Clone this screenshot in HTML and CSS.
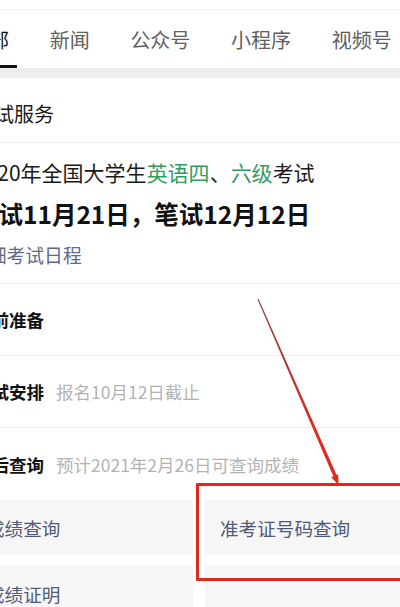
FILE: index.html
```html
<!DOCTYPE html>
<html lang="zh-CN">

<head>
    <meta charset="UTF-8">
    <meta name="viewport" content="width=device-width, initial-scale=1.0">
    <title>考试服务</title>
    <link rel="stylesheet" href="styles.css">
</head>

<body>
    <div class="page">
        <div class="top"></div>

        <nav class="tabs">
            <div class="tab active">全部</div>
            <div class="tab">新闻</div>
            <div class="tab">公众号</div>
            <div class="tab">小程序</div>
            <div class="tab">视频号</div>
        </nav>
        <div class="band"></div>

        <main class="card">
            <div class="card-title">考试服务</div>

            <section class="info">
                <p class="info-line">2020年全国大学生<span class="hl">英语四</span>、<span class="hl">六级</span>考试</p>
                <p class="info-date">口试11月21日，笔试12月12日</p>
                <p class="info-link">详细考试日程</p>
            </section>

            <ul class="steps">
                <li class="step"><span class="step-name">考前准备</span></li>
                <li class="step"><span class="step-name">考试安排</span><span class="step-note">报名10月12日截止</span></li>
                <li class="step"><span class="step-name">考后查询</span><span class="step-note">预计2021年2月26日可查询成绩</span></li>
            </ul>

            <div class="grid">
                <div class="cell">成绩查询</div>
                <div class="cell">准考证号码查询</div>
                <div class="cell">成绩证明</div>
                <div class="cell"></div>
            </div>
        </main>

        <!-- annotation on top of the screenshot -->
        <div class="mark-box"></div>
        <svg class="mark-arrow" width="400" height="607" viewBox="0 0 400 607">
            <defs>
                <linearGradient id="arrowGrad" x1="258" y1="299" x2="338" y2="484" gradientUnits="userSpaceOnUse">
                    <stop offset="0" stop-color="#8a3b3e" />
                    <stop offset="0.5" stop-color="#c9302a" />
                    <stop offset="1" stop-color="#e8261c" />
                </linearGradient>
            </defs>
            <polygon points="258.5,298.8 257.5,299.2 334.4,478.7 337.6,477.3" fill="url(#arrowGrad)" />
            <polygon points="338.6,485 331.3,477.2 338.1,474.3" fill="#e8261c" />
        </svg>
    </div>
</body>

</html>
```

FILE: styles.css
```css
/* Page frame */
body {
    margin: 0;
    background-color: #fff;
    font-family: "Noto Sans", "Noto Sans CJK SC", sans-serif;
    color: #1a1a1a;
}

.page {
    position: relative;
    width: 400px;
    height: 607px;
    overflow: hidden;
    background-color: #fff;
}

.top {
    height: 9px;
    border-bottom: 1px solid #f1f1f1;
}

/* Tabs */
.tabs {
    display: flex;
    gap: 40.7px;
    height: 58px;
    margin-left: -31px;
    font-family: "Noto Sans CJK SC", sans-serif;
    font-size: 20px;
    color: #616161;
}

.tab {
    position: relative;
    display: flex;
    align-items: center;
    white-space: nowrap;
}

.tab.active {
    color: #111;
}

.tab.active::after {
    content: '';
    position: absolute;
    left: 0;
    right: -8px;
    bottom: 0;
    height: 3px;
    background-color: #111;
}

.band {
    height: 10px;
    background-color: #ededed;
}

/* Card */
.card {
    width: 452px;
    margin-left: -26px;
    font-family: "Noto Sans CJK SC", sans-serif;
}

.card-title {
    font-size: 20px;
    line-height: 28px;
    padding: 22px 0 14px;
    border-bottom: 1px solid #ececec;
    white-space: nowrap;
}

.info {
    padding: 14px 0;
    border-bottom: 1px solid #ececec;
}

.info p {
    margin: 0;
    white-space: nowrap;
}

.info-line {
    font-size: 21px;
    line-height: 30px;
}

.info-line .hl {
    color: #2f9d5f;
}

.info-date {
    margin-top: 12px !important;
    font-size: 24.5px;
    line-height: 30px;
    font-weight: bold;
    color: #111;
}

.info-link {
    margin-top: 12px !important;
    margin-left: -5px !important;
    font-size: 18.8px;
    line-height: 28px;
    color: #5d6a89;
}

/* Steps */
.steps {
    list-style: none;
    margin: 0;
    padding: 0;
}

.step {
    display: flex;
    align-items: center;
    height: 71px;
    white-space: nowrap;
    border-bottom: 1px solid #ececec;
}

.step:last-child {
    border-bottom: none;
    height: 72px;
}

.step-name {
    font-size: 17.5px;
    font-weight: bold;
    color: #111;
}

.step-note {
    margin-left: 12px;
    font-size: 17.5px;
    color: #b3b3b3;
}

/* Shortcut grid */
.grid {
    display: grid;
    grid-template-columns: 222px 222px;
    column-gap: 12px;
    row-gap: 11px;
    margin-left: -3px;
}

.cell {
    display: flex;
    align-items: center;
    height: 55px;
    padding-left: 15px;
    background-color: #f6f6f6;
    font-size: 18.6px;
    color: #505a76;
    white-space: nowrap;
}

/* Red annotation */
.mark-box {
    position: absolute;
    left: 196px;
    top: 483px;
    width: 230px;
    height: 98px;
    box-sizing: border-box;
    border: 3.5px solid #e3261e;
    border-radius: 1px;
}

.mark-arrow {
    position: absolute;
    left: 0;
    top: 0;
    pointer-events: none;
}
```
